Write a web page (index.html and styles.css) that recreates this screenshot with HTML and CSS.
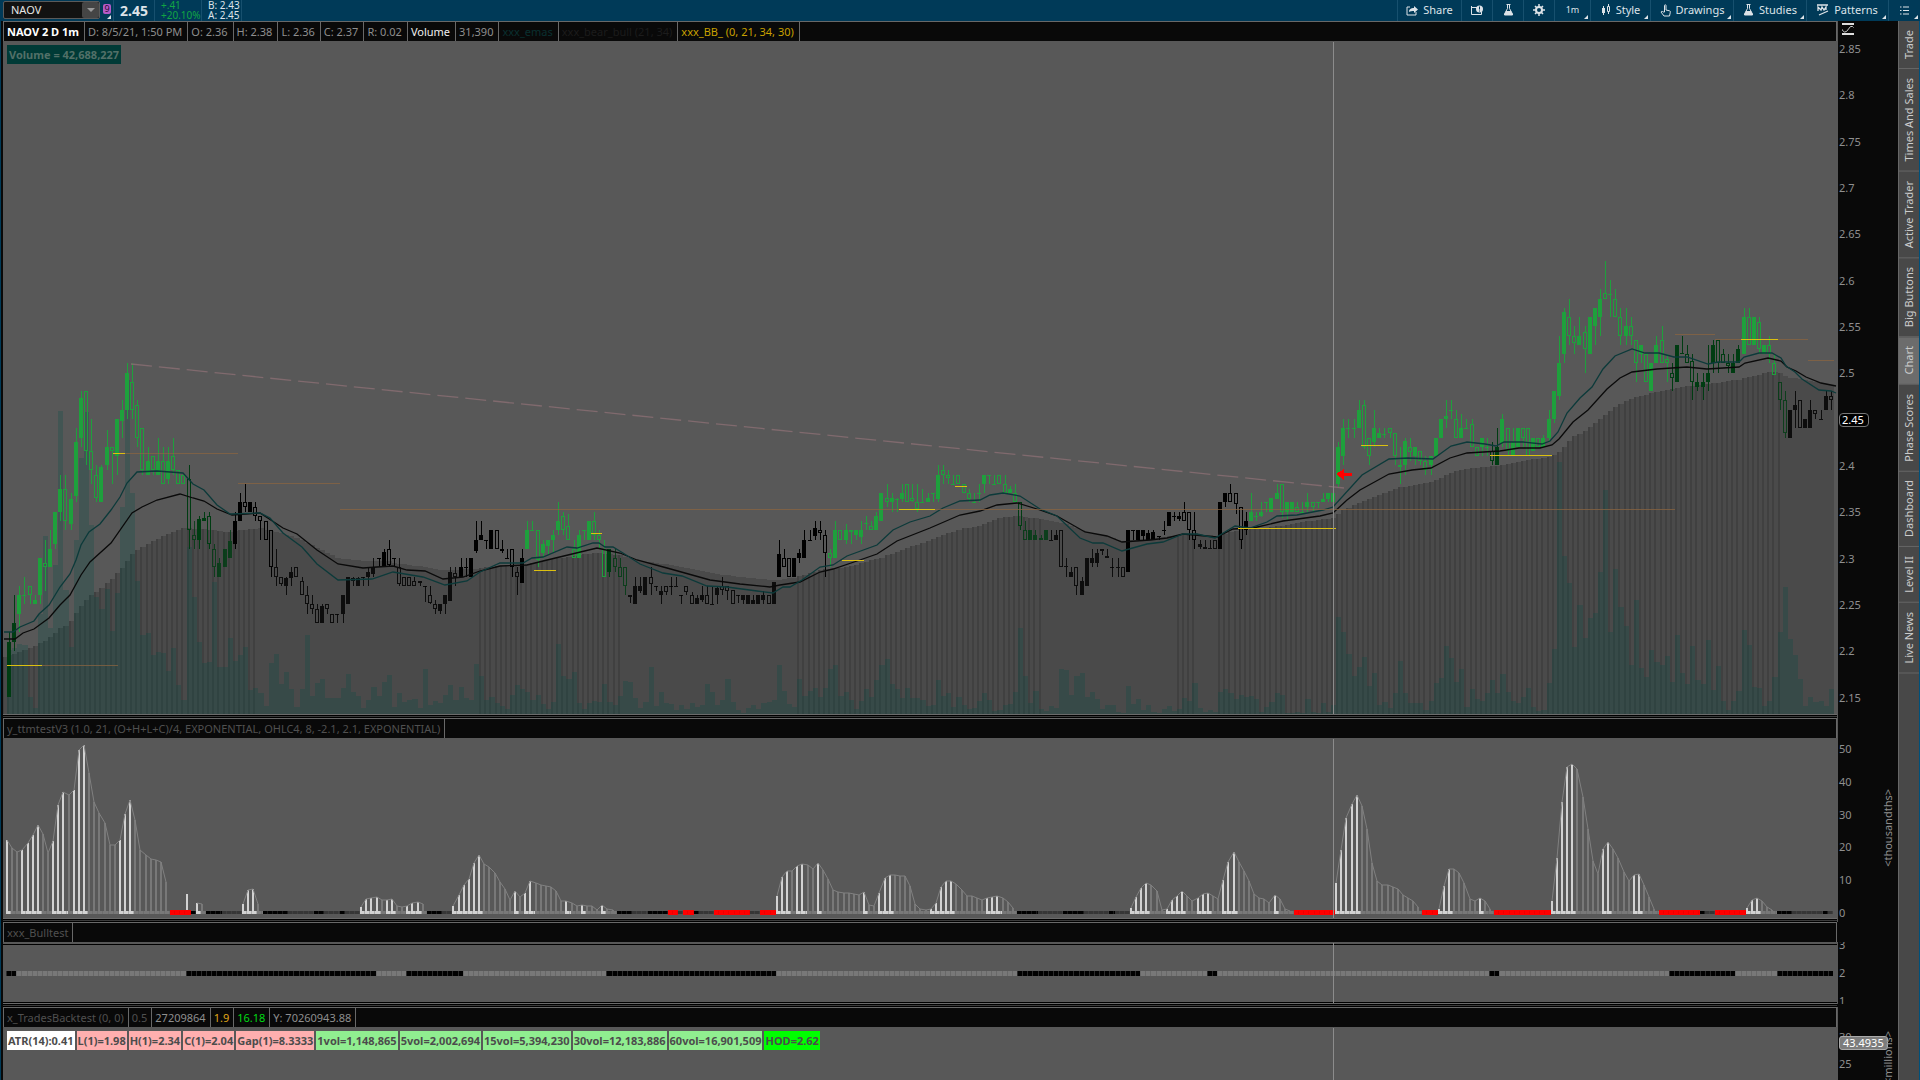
FILE: index.html
```html
<!DOCTYPE html>
<html lang="en">
<head>
<meta charset="utf-8">
<title>NAOV Chart</title>
<link rel="stylesheet" href="styles.css">
</head>
<body>
<header class="topbar">
  <div class="symbol">
    <input class="symbol-input" type="text" value="NAOV" aria-label="Symbol">
    <button class="symbol-drop" aria-label="Symbol list"><svg width="8" height="5" viewBox="0 0 8 5"><path d="M0 0h8L4 4z" fill="#999"/></svg></button>
  </div>
  <button class="link-color corner" aria-label="Link 9"><span class="link-tag">9</span></button>
  <div class="last">2.45</div>
  <div class="pair up"><span>+.41</span><span>+20.10%</span></div>
  <div class="pair quote"><span>B: 2.43</span><span>A: 2.45</span></div>
  <nav class="tools">
    <button class="tool w64"><svg width="12" height="11" viewBox="0 0 12 11"><path d="M4 2H1v8h9V7" fill="none" stroke="#dde3e8"/><path d="M3 7c0-3 2-4 5-4V1l4 3.500L8 8V6C6 6 4 6 3 7z" fill="#dde3e8"/></svg>Share</button>
    <button class="tool w31" aria-label="Info"><svg width="12" height="10" viewBox="0 0 12 10"><path d="M.5 2.500h6M.5 1v8.500h10V7" fill="none" stroke="#dde3e8"/><circle cx="8.500" cy="4" r="3.500" fill="#dde3e8"/><path d="M8.500 1.500v3M8.500 5.500v1" stroke="#003a58"/></svg></button>
    <button class="tool w31" aria-label="Edit studies"><svg width="11" height="12" viewBox="0 0 11 12"><path d="M3.500.5h4M4.500.5v4L1.500 10v1h8v-1l-3-5.500v-4" fill="none" stroke="#dde3e8"/><path d="M3 7h5l2 4H1z" fill="#dde3e8"/></svg></button>
    <button class="tool w31" aria-label="Settings"><svg width="12" height="12" viewBox="0 0 12 12"><circle cx="6" cy="6" r="3" fill="none" stroke="#dde3e8" stroke-width="2"/><path d="M6 0v3M6 9v3M0 6h3M9 6h3M2 2l2 2M8 8l2 2M10 2L8 4M4 8l-2 2" stroke="#dde3e8" stroke-width="1.500"/></svg></button>
    <button class="tool w36 corner small">1m</button>
    <button class="tool w60 corner"><svg width="10" height="12" viewBox="0 0 10 12"><path d="M2.500 2v9M7.500 0v10" stroke="#dde3e8"/><path d="M1 4h3v5H1z" fill="#dde3e8"/><path d="M6.500 2.500h2v5h-2z" fill="#003a58" stroke="#dde3e8"/></svg>Style</button>
    <button class="tool w83 corner"><svg width="11" height="13" viewBox="0 0 11 13"><path d="M4.500 8V1.500c0-1 1.500-1 1.500 0V6l3.500.8c.8.2 1 .7.8 1.500L9.500 12H4L1 8c.5-1 1.500-.8 2.200 0z" fill="none" stroke="#dde3e8"/></svg>Drawings</button>
    <button class="tool w73 corner"><svg width="11" height="12" viewBox="0 0 11 12"><path d="M3.500.5h4M4.500.5v4L1.500 10v1h8v-1l-3-5.500v-4" fill="none" stroke="#dde3e8"/><path d="M3 7h5l2 4H1z" fill="#dde3e8"/></svg>Studies</button>
    <button class="tool w82 corner"><svg width="12" height="12" viewBox="0 0 12 12"><path d="M0 1h11M2 11l9-4M1 7V3l3 3 1-3 2 3 2-3v3" fill="none" stroke="#dde3e8" stroke-width="1.300"/></svg>Patterns</button>
    <button class="tool w32 corner" aria-label="Menu"><svg width="9" height="9" viewBox="0 0 9 9"><path d="M0 1h1.500M0 4.500h1.500M0 8h1.500M3 1h6M3 4.500h6M3 8h6" stroke="#dde3e8" stroke-width="1.200"/></svg></button>
  </nav>
</header>
<div class="workspace">
  <main class="charts">
    <section class="panel price">
      <div class="head">
        <span class="strong">NAOV 2 D 1m</span><span>D: 8/5/21, 1:50 PM</span><span>O: 2.36</span><span>H: 2.38</span><span>L: 2.36</span><span>C: 2.37</span><span>R: 0.02</span><span class="white">Volume</span><span>31,390</span><span class="teal">xxx_emas</span><span class="faint">xxx_bear_bull (21, 34)</span><span class="gold">xxx_BB_ (0, 21, 34, 30)</span>
      </div>
      <div class="plot">
        <svg id="price" viewBox="3 41 1834 673" preserveAspectRatio="none"></svg>
        <div class="chips"><span class="chip volume">Volume = 42,688,227</span></div>
      </div>
      <div class="axis">
        <svg class="fit" width="13" height="14" viewBox="0 0 13 14"><path d="M0 2h12M0 12h12" stroke="#ddd" stroke-width="2"/><path d="M.5 7.500v1l2 1.500 2-.5 4-5h2l1 1" fill="none" stroke="#ccc"/></svg>
        <span>2.85</span><span>2.8</span><span>2.75</span><span>2.7</span><span>2.65</span><span>2.6</span><span>2.55</span><span>2.5</span><span class="current">2.45</span><span>2.4</span><span>2.35</span><span>2.3</span><span>2.25</span><span>2.2</span><span>2.15</span>
      </div>
    </section>
    <section class="panel ttm">
      <div class="head dim"><span>y_ttmtestV3 (1.0, 21, (O+H+L+C)/4, EXPONENTIAL, OHLC4, 8, -2.1, 2.1, EXPONENTIAL)</span></div>
      <div class="plot"><svg id="ttm" viewBox="3 738 1834 180" preserveAspectRatio="none"></svg></div>
      <div class="axis"><span>50</span><span>40</span><span>30</span><span>20</span><span>10</span><span>0</span><em class="unit">&lt;thousandths&gt;</em></div>
    </section>
    <section class="panel bull">
      <div class="head dim"><span>xxx_Bulltest</span></div>
      <div class="plot"><svg id="bull" viewBox="3 942 1834 61" preserveAspectRatio="none"></svg></div>
      <div class="axis"><span>3</span><span>2</span><span>1</span></div>
    </section>
    <section class="panel trades">
      <div class="head"><span class="dim">x_TradesBacktest (0, 0)</span><span class="dim">0.5</span><span>27209864</span><span class="amber">1.9</span><span class="green">16.18</span><span>Y: 70260943.88</span></div>
      <div class="plot">
        <svg id="trades" viewBox="3 1027 1834 53" preserveAspectRatio="none"></svg>
        <div class="chips"><span class="chip">ATR(14):0.41</span><span class="chip pink">L(1)=1.98</span><span class="chip pink">H(1)=2.34</span><span class="chip pink">C(1)=2.04</span><span class="chip pink">Gap(1)=8.3333</span><span class="chip mint">1vol=1,148,865</span><span class="chip mint">5vol=2,002,694</span><span class="chip mint">15vol=5,394,230</span><span class="chip mint">30vol=12,183,886</span><span class="chip mint">60vol=16,901,509</span><span class="chip lime">HOD=2.62</span></div>
      </div>
      <div class="axis"><span>30</span><span>25</span><strong class="marker">43.4935</strong><em class="unit">&lt;millions&gt;</em></div>
    </section>
  </main>
  <nav class="tabs">
    <button>Trade</button><button>Times And Sales</button><button>Active Trader</button><button>Big Buttons</button><button class="on">Chart</button><button>Phase Scores</button><button>Dashboard</button><button>Level II</button><button>Live News</button>
  </nav>
</div>
<script src="chart.js"></script>
</body>
</html>
```
FILE: styles.css
```css
* { box-sizing: border-box; }
body {
  margin: 0;
  height: 100vh;
  display: flex;
  flex-direction: column;
  overflow: hidden;
  background: #090909;
  color: #8f8f8f;
  font: 11px/16px "Noto Sans", "Open Sans", sans-serif;
}
button { border: 0; padding: 0; margin: 0; background: none; color: inherit; font: inherit; }

.topbar { display: flex; flex: 0 0 21px; background: #003a58; color: #dde3e8; padding-left: 3px; }
.symbol { display: flex; width: 97px; height: 18px; margin: 1px 3px 0 0; border: 1px solid #5a5a5a; border-radius: 2px; background: #121212; }
.symbol-input { flex: 1; min-width: 0; border: 0; padding: 0 0 0 7px; background: none; color: #e6e6e6; font: inherit; }
.symbol-drop { width: 17px; background: #454545; display: grid; place-items: center; border-radius: 2px; }
.link-color { width: 10px; display: flex; align-items: flex-start; padding-top: 4px; }
.link-tag { width: 8px; height: 10px; background: #b45ac8; color: #2a0a30; font-size: 9px; line-height: 10px; border-radius: 2px; text-align: center; }
.last { width: 41px; border-left: 1px solid #17506e; text-align: center; font-size: 14px; font-weight: 700; line-height: 21px; }
.pair { display: flex; flex-direction: column; width: 47px; border-left: 1px solid #17506e; padding: 0 0 0 6px; font-size: 10px; line-height: 10px; }
.up { color: #12a544; }
.quote { width: 41px; border-right: 1px solid #17506e; }
.tools { display: flex; margin-left: auto; }
.tool { display: flex; align-items: center; justify-content: center; gap: 5px; border-left: 1px solid #17506e; padding-bottom: 1px; white-space: nowrap; }
.small { font-size: 9px; }
.corner { position: relative; }
.corner::after { content: ""; position: absolute; right: 2px; bottom: 2px; border: 2px solid transparent; border-right-color: #dde3e8; border-bottom-color: #dde3e8; }
.w31 { width: 31px; } .w32 { width: 32px; } .w36 { width: 36px; } .w60 { width: 60px; }
.w64 { width: 64px; } .w73 { width: 73px; } .w82 { width: 82px; } .w83 { width: 83px; }

.workspace { flex: 1; min-height: 0; display: flex; border-left: 1px solid #003a58; border-right: 1px solid #00507a; }
.charts { flex: 1; min-width: 0; display: flex; flex-direction: column; padding-left: 2px; }
.panel { display: grid; grid-template: 20px minmax(0, 1fr) 4px / minmax(0, 1fr) 61px; min-height: 0; overflow: hidden; }
.price { flex: 697 1 0; }
.ttm { flex: 204 1 0; }
.bull { flex: 85 1 0; }
.trades { flex: 73 1 0; grid-template-rows: 20px minmax(0, 1fr); }
.panel::after { content: ""; grid-row: 3; grid-column: 1; border-top: 1px solid #6a6a6a; background: linear-gradient(#000 1px, #3a3a3a 1px, #3a3a3a 2px, #000 2px); }
.trades::after { display: none; }
.head { grid-row: 1; grid-column: 1; display: flex; border: 1px solid #686868; border-bottom: 0; white-space: nowrap; line-height: 19px; }
.head span { padding: 0 5px 0 3px; border-right: 1px solid #686868; }
.head .strong { color: #fff; font-weight: 700; }
.head .white { color: #f0f0f0; }
.head .teal { color: #0a3030; }
.head .faint { color: #1c1c1c; }
.head .gold { color: #c8a000; }
.head .amber { color: #e0a818; }
.head .green { color: #00dc14; }
.dim, .head .dim { color: #505050; }
.ttm .head span, .bull .head span, .trades .head span { padding: 0 4px 0 3px; }
.plot { grid-row: 2; grid-column: 1; display: grid; min-height: 0; background: #585858; overflow: hidden; }
.plot svg { grid-area: 1 / 1; width: 100%; height: 0; min-height: 100%; display: block; }
.chips { grid-area: 1 / 1; align-self: start; display: flex; gap: 2px; padding: 4px; }
.chip { height: 19px; padding: 0 1px; background: #fff; color: #4c4c4c; font-weight: 700; line-height: 19px; white-space: nowrap; }
.volume { padding: 0 2px; background: #003a36; color: #527068; }
.pink { background: #ffafaf; }
.mint { background: #90ee90; }
.lime { background: #0f0; }

.axis { position: relative; grid-row: 1 / -1; grid-column: 2; display: flex; flex-direction: column; justify-content: space-between; align-items: flex-start; padding-left: 1px; border-left: 1px solid #585858; overflow: hidden; }
.price .axis { padding-top: 20px; padding-bottom: 12px; }
.ttm .axis { padding-top: 23px; padding-bottom: 1px; }
.bull .axis { margin: 20px 0 3px; justify-content: center; }
.bull .axis span { flex: none; line-height: 28px; }
.trades .axis { grid-row: 1 / 3; padding-top: 22px; justify-content: flex-start; gap: 11px; }
.fit { position: absolute; left: 4px; top: 1px; }
.axis .current { height: 14px; margin: 1px 0; padding: 0 4px 0 2px; border: 1px solid #777; border-radius: 4px; background: #000; color: #fff; line-height: 12px; }
.unit { position: absolute; right: 2px; top: 71px; font-style: normal; writing-mode: vertical-rl; transform: rotate(180deg); }
.trades .unit { top: 24px; }
.marker { position: absolute; left: 1px; top: 29px; height: 14px; padding: 0 3px; border: 1px solid #aaa; border-radius: 3px; background: #7c7c7c; color: #fff; font-weight: 400; line-height: 12px; }

.tabs { width: 21px; display: flex; flex-direction: column; background: #484848; border-left: 1px solid #666; }
.tabs button { writing-mode: vertical-rl; transform: rotate(180deg); width: 20px; padding: 9px 0; border-top: 1px solid #666; color: #ccc; line-height: 20px; white-space: nowrap; }
.tabs .on { background: #6c6c6c; }
```
FILE: chart.js
```js
// One entry per minute bar: colour letter (g bright, d dark, k black; capital = filled),
// then high, body top, body bottom and low, in cents above 2.00.
const candles = `D22 21 15 15|D26 23 21 20|G27 26 24 22|g28 26 26 25|g27 27 26 25|G26 25.5 25 25|G30 30 26 25|g32 29.5 29 26.5|G33 31 29 29|G35 35 31.5 31
G39 37.5 35 34|g39 37.5 34 33|G37 36.4 33.7 33|G44 42.5 36.7 36|G48 47.3 43 42|g48 48 41.5 40|g45 41.5 39.5 38|g40 39 36.5 36|G40 39.8 36 36|G43.8 42 40 39.5
g42 42 41.5 38|G45 45 41 39|G47 46 44.8 43|G51 50 46 45|g51 49 46 45|g47 46.5 43 42|g44 44 39.5 39|G42 40.5 39 39|g41 41 39.5 39|G43 40.5 39 39
g42 40.5 38 38|G42 40.5 38.5 38|g43 41 39.5 39|g39.5 39.5 38 38|g39 39 38 38|d40 38.5 33 31|d34 32.5 32 31|D34.5 34.2 32 31|D35 34.3 34 34|d35 34.5 31.5 31
d31.5 31 29 28|D30 29.5 28 28|D31 31 29 29|D33 31.8 30 30|K35 34 31.5 31|K37 36 34 34|k38 36 35.5 35|K36 36 35 35|k36 35.5 34.5 34|k34.5 34.5 34 32
k34 34 32 32|k33 33 29 28|k31 29 28 27|k28 28 27.2 27|K28 27.8 27 26|K29 28.5 27.8 27|k29 29 28 28|k28 27.5 26 26|k27 26 25 24|k26 25 24.5 24
k25 24.5 23 23|K25 24.8 23 23|k25 25 24.5 24|k24 24 23 23|k24 24 24 23|K26 26 24 23|K28 28 25 25|K28 27.9 27.5 27|K28 27.8 27 27|k28 28 28 27
K29 28.5 28 27|K30 29 28.3 28|k30 30 30 29|K31 30.7 29 29|k32 31 29.2 29|K30 30 29.9 29|k30 29 27.2 27|k28 28 27 27|k28 28 27 27|k28 27.5 27 27
K27.5 27.5 27.3 27|k27 27 27 25.3|k27 26 25.2 25|k25.5 25 24.5 24|K25 25 24.3 24|K26 26 25 24|K29 28.5 25.4 25.4|k29 28.4 28 27|K30 29 28 28|k30 29 29 28
K30 30 28 28|K34 32 30.8 30.6|K34 32.5 32 32|k32 32 31.8 31|K33 33 31 31|k33 33 31 31|k32 31 30.8 30.5|K31 30 29.9 30|k31 31 29 28|k29 28.5 28 26
K31 30 27.3 27.3|G34 33 31 31|g34 33 33 33|g33 33 29.8 29|G32 31.5 30.5 30|G32 32 31.3 30.3|G33 32.5 32 30.5|G36 34 33 32.5|g35 34.5 33 32.5|g34.8 33.5 32 32
g32 31 30 30|G33 32.5 30 30|g33 33 33 32|G34 34 32 32|g35 34 32.5 32|g33 32.5 32 31|g32 31 28 28|D31 31 28.5 28|d31 30 29 28.5|d30 29 28 28
d29 29 27 26|K26 26 25.8 25.2|K28 27 25 25|K28 27 26.5 26.2|K28 28 26 26|k29 28 27.2 26|k27 27 27 26.5|K27 26.5 26 25|k27 27 26.3 26|k28 27 27 26
k28 27 27 27|k26 26 26 25|k27 27 26.3 26|k26.3 26 25 25|K26 25.7 25 25|K27 26 25.5 25.3|k27 26 25 25|k27 25 25 25|K27 26.8 26 25|k28 27 26.6 26
k27 27 26.5 25.5|k26.6 26.6 25 25|k26 26 26 25.2|K26 26 25.5 25|K26 26 25 25|K26 25.5 25 25|K26 26 25 25|K26.5 26 25.5 25|k26 26 25 25|K27.4 27.4 25 25
K32 30.4 28 28|k31 30 29 29|k30 30 28 28|K30 30 28 28|K31 30.5 30 29.5|K33 32 30 30|k33 32 32 32|K34 33.2 32.4 32|k34 33 32.7 32|k33 32.5 30.5 28
g31 30.5 30 29|G34 33 30 30|g33 33 32 32|G33.7 33 32 31.5|g33 33 32.8 31.5|G33 33 32.5 32|G34 33 32.3 31.5|G34.5 33.8 33.7 33|g34 33.5 33 33|G35 34.5 33 33
G37 37 34 34|g38 36.5 36 35.5|G37 36.5 36 35|G36.5 36.4 36.3 35|G38 37 36.4 36|g38 38 36 36|g38 36.5 36.2 36|g38 36 35.3 35|g37.5 36 36 36|G37 36.5 36 36
g37 37 37 36|G40 39 36.4 36|g40 39.5 39 38|g39.5 39 38.6 38|g39 38 38 38|g39 39 38 38|g38 38 37 37|g37.5 37 36.4 36|g37 36 36 36|G38 37 36.9 36
G39 39 38 37|G39 39 38.8 38|g39 38 38 38|g39 39 38 38|g39 38 37 37|G37.8 37.5 37 37|g38 37 36 36|d36 36 33.5 33|d34 33 32 32|D33 33 32 32
D33 32.5 32 32|D32.5 32.2 32 32|D33 33 32 32|k33 32 32 32|K33 32.5 32 32|k33 33 29 29|K30 29.1 29 28|K29 28.5 28 28|k29 29 27 26|K28 27.5 26 26
K30 30 27 27|K31 30 29.5 29|K31 30.5 29.5 29|k31 31 30.8 30.3|k31 30.2 30 30|k30 29 29 28|K30 29 28.9 28|k29 29 28 28|K33 33 28.5 28.5|k33 33 33 32
K33 33 32 32|K33 33 32.4 32|K33 32.7 32 32|K33 32.8 32 32|k32.4 32.4 32.4 32|k34 33 33 32.5|K35 35 33.5 33.5|k35 34.5 34.5 34|K35 34.5 34.2 34|k36 35 34 34
k35 35 33 32|k35 33 32 31|K32 31.5 31.2 31|K32 31.2 31 31|K32 31.1 31 31|k32 32 31 31|K36 36 31 31|K37 37 36 35.5|k38 37 36 36|k37 37 35.8 34.8
k35.5 35.5 32 31|K35 34 33 32.5|G37 35 34 34|g35 34.5 34.5 34|G36 35 34.5 34.4|g36 36 36 35|G36.5 36.5 35 35|G38 37 36.4 36.4|g38 38 35 34.3|G36 36 35 34
G36 36 35 35|g36 35.5 35 35|g36 35 35 35|G37 36 35.5 35|g36 36 35.5 35|g36 36 36 35.4|G37 36.4 36 36|G37 37 36.4 36|G38 37 36 36|G42.5 42 38 37.6
G45 44 41 40|g45 44 44 43|G45 44 43.9 43|G47 46 44 44|g47 46.5 42 41.8|g43 43 41 40|G46 44 42.5 42|G44 43.5 43 43|g44 43.4 43.4 43|g44 44 43.5 43
g43.5 43.5 41 40|g42 40 39.8 38|G43 42.6 40 39|g43 42 41.4 40.5|G42 42 41 40|g41.6 41.5 40.5 40|g41 40.5 39.5 39|G41 41 40 39|G43 43 41 41|G45 45 43 43
G47 45.3 45 44|g47 46 46 45|g46 45 43 43|G45.5 44 43 43|g45 44 44 44|g45 44.5 42 42|g42 42 41 41|G43 43 42 41|g43 42 42 41|d42.5 41.6 40.5 40
D44 42 40 40|G45.5 45 42.4 42|g44 44 41.5 41|G44 42.5 41 41|G44 44 42 42|g44 44 43 42|g44 44 41 41|G43 42.9 41.5 41.5|g43 43 42 42|G43.3 43 42 42
G46 45 43 42.5|G48 48 45 44.6|G54 51 47.5 47|G57 56.5 52 51|g58 56 54 53|g55 54 53.2 52|G56 54 53 53|g55 54.4 52.5 50|G56 56 52 52|G57 57 55 53
G59 58 56 54|g62 58.6 58 58|g60 58.5 58.5 56|g59 58 56 56|g57 56 54 53|G57 55 54 53|g56 55 54 53|g53.5 53.5 51 49|G53 53 52 51|g52 52 49 49
G51 51 48 48|G54 53 51 51|g55 53.5 51 51|g52 51.5 51 49|d51 50 49.4 48|D53 53 49 49|D54 52.1 52 52|d53 52 51 51|d52 51.3 49 47|D50 49 48.5 48
D50 49 48.5 47|D53 50 49 48|D53.5 53 51 50|d53.5 53.5 51 50|d52.5 52 51 51|d52 51 50.7 50|D52 51 50 50|D53 52.6 51 51|G57 56 52 52|g57 56 53 53
G56 56 53 53|g56 55.5 52.5 52|G53 53 52 52|g54 53 52 51|g52 51 49.7 49.7|d49 49 47 46|d48 47 43.5 43|K46 46 43 43|K48 46.5 46 44|k47 47 44 44
K45 45 44 44|K47 46 44 44|k46 46 45.5 45|k46 45 45 45|K48 47.5 46 46|k48 47.5 47 46`.split(/[|\n]/);

// Volume bar heights
const volume = `64 66 70 69 17 6 100 178 86 149 303 124 67 174 256 302 189 117 105 125 83 121 207 334 221 133 79 81 59 62 61 43 66 29 14 167 117 72 51 52 132 47 47 76 53 59 67 24 26 21
8 51 60 30 42 25 7 25 79 18 31 35 16 16 16 26 40 22 18 6 14 27 18 32 39 7 21 12 14 15 6 45 9 13 11 19 29 14 27 16 14 50 38 14 17 11 8 5 19 29
25 22 14 19 10 5 12 70 38 35 42 11 5 11 13 12 30 12 9 18 33 32 16 6 12 47 8 22 11 10 4 9 5 11 7 9 30 22 9 14 35 12 4 1 6 9 5 11 12 14
49 23 10 7 35 18 23 26 17 26 45 49 18 22 14 5 13 25 17 34 49 55 30 25 16 26 16 16 14 8 9 34 18 21 7 17 9 5 6 13 21 14 3 4 9 10 22 86 38 11
23 5 3 8 6 45 44 19 38 41 17 22 15 5 9 9 2 1 28 10 15 4 9 2 1 5 8 3 5 16 13 31 6 2 4 2 22 25 21 15 19 17 18 15 2 7 12 21 19 1
1 2 1 15 2 1 11 2 9 97 82 60 38 47 57 28 41 9 12 6 21 53 21 11 11 11 4 13 31 36 68 56 32 45 7 25 15 13 21 34 21 40 22 13 11 17 26 7 3 4
31 65 252 158 131 67 109 76 96 101 142 224 82 145 107 88 49 114 46 37 64 52 49 58 32 79 41 30 68 34 30 74 24 48 13 4 13 23 84 69 27 26 8 13 37 82 127 75 59 35 8 17 12 13 8 25`.split(/\s+/).map(Number);

const fastAverage = "4,632 13,632 20,627 34,621 39,614 49,605 60,587 70,574 76,560 81,545 89,532 100,524 111,510 120,497 127,483 137,472 157,471 183,473 193,484 204,490 217,505 230,514 260,513 270,518 283,533 302,547 317,564 338,580 372,579 393,572 423,577 445,585 467,581 480,572 500,563 523,563 532,558 543,557 567,547 577,548 593,543 599,543 605,547 613,547 623,553 640,564 663,573 682,576 707,586 727,587 757,591 773,593 783,587 790,587 802,580 820,567 833,565 847,556 877,545 893,530 910,522 930,516 943,508 960,501 980,500 990,495 1003,493 1020,496 1040,509 1057,516 1080,538 1093,543 1103,543 1122,551 1147,544 1163,542 1183,534 1197,534 1215,538 1235,526 1250,528 1267,522 1277,516 1297,515 1323,510 1333,507 1362,475 1389,459 1408,458 1433,459 1451,446 1467,442 1485,444 1496,446 1504,442 1523,442 1542,444 1550,441 1558,432 1567,413 1580,398 1592,387 1603,369 1615,356 1632,349 1645,353 1659,353 1674,357 1687,357 1708,364 1718,362 1739,362 1744,357 1759,353 1772,353 1781,358 1786,366 1795,372 1802,379 1819,390 1831,391 1836,393";
const slowAverage = "4,639 15,639 23,633 34,629 49,618 60,605 70,595 81,575 90,562 111,543 132,513 142,507 157,500 180,494 193,498 204,501 217,509 232,515 260,513 283,528 297,534 317,550 338,564 363,568 377,567 393,566 407,570 425,571 443,579 463,577 480,571 500,566 527,565 543,561 597,548 620,553 637,560 667,568 710,580 740,584 770,587 780,585 800,582 820,572 833,569 857,561 877,554 897,541 930,528 960,515 980,511 997,505 1017,503 1037,509 1057,516 1085,532 1107,536 1122,542 1150,540 1167,538 1183,534 1217,537 1233,529 1253,528 1283,521 1320,516 1333,513 1347,500 1360,490 1389,474 1412,470 1431,468 1450,458 1467,453 1500,451 1519,448 1540,448 1552,445 1559,439 1573,422 1588,410 1607,389 1620,378 1632,372 1657,369 1687,367 1707,369 1739,367 1745,363 1768,358 1781,361 1787,367 1796,371 1806,377 1821,383 1836,386";
const cloud = "4,657 17,653 33,647 48,639 60,628 70,623 80,607 90,596 110,581 123,567 133,552 157,539 183,528 203,529 227,532 260,528 283,534 300,539 317,548 338,558 367,561 387,561 400,564 427,567 440,570 473,569 480,568 500,566 527,564 560,558 593,553 620,555 640,561 673,565 710,573 757,579 780,580 797,577 820,570 847,567 880,558 913,546 960,529 980,526 1000,518 1017,516 1043,519 1063,523 1087,532 1107,536 1120,541 1153,538 1173,536 1193,533 1217,536 1233,531 1273,527 1310,521 1333,518 1343,510 1362,502 1397,488 1435,481 1450,473 1465,469 1496,466 1527,460 1550,457 1559,452 1573,437 1588,429 1603,417 1615,407 1632,398 1653,393 1687,386 1718,383 1741,379 1770,372 1781,373 1787,377 1814,382 1836,386";

// Histogram: w rising, f falling, with bar height; R, K, D mark bars without height
const histogram = `w72 f64 f60 w62 w69 w77 w87 f78 f59 w71 w107 w120 f117 w122 w162 w167 f139 f110 f99 f89 f67 f67 w72 w98 w112 f92 f62 f57 f53 f52 f50 f30 R R R R18 K w9 f8 K K K D D D D w8 w22 w23 f8
K K K K K D D D D D K K D D D K D D D w5 w13 w14 w15 f12 w12 w13 f6 f5 w6 w9 w10 f8 K K K D D w6 w17 w27 w33 w49 w57 f48 f45 f39 f30 f23 f12 w21
f15 w19 w31 f29 f27 f26 f25 f21 f11 w11 f9 f6 w7 f6 f6 f2 w7 f3 f2 K K K D D D K K K K R R D R R K D D D R R R R R R R D D R R R
w16 w35 w41 f41 w46 w48 f47 f43 w49 f42 f33 f22 f20 f19 f19 f18 f17 w20 f7 f6 w19 w34 w37 f37 f36 f36 f26 f8 f3 f2 w3 w9 w25 w31 w31 f28 f22 f16 f16 f14 f12 w14 w15 w16 f14 f10 f4 K K K
K D D D D D K K K K D D D D D K D D D w4 w15 w24 w29 f27 f21 f2 w3 w12 w16 w21 f16 f11 w14 w18 w19 f16 f13 w32 w50 w60 f50 f41 f31 f18 f14 f13 f9 w17 f13 f3
f1 R R R R R R R R w29 w62 w94 w108 w117 f106 f83 f49 f31 f27 f27 f25 f23 f17 f14 f11 f5 R R R w3 w26 w43 f43 f39 f29 f13 f11 w14 f11 f3 R R R R R R R R R R
R w11 w54 w110 w145 w148 f143 f115 f83 f51 f38 w63 w70 f63 f54 f40 f31 w37 w38 f27 f15 f3 R R R R R R R R K D D R R R R R R w4 w12 w14 f11 f5 f2 K K K D D D D D D K D`.split(/\s+/);

const step = 5.132;
const r = Math.round;
const centre = i => r(9 + step * i);
const priceY = c => r(363.4 + (51 - c) * 9.27);
const rect = (x, y, w, h, fill, more = "") => `<rect x="${x}" y="${y}" width="${w}" height="${h}" fill="${fill}" ${more}/>`;
const crosshair = (top, bottom) => rect(1333, top, 1, bottom - top, "#8c8c8c");
const draw = (id, parts) => { document.getElementById(id).innerHTML = parts.join(""); };

const cloudPoints = cloud.split(" ").map(p => p.split(",").map(Number));
function cloudY(x) {
  let k = 1;
  while (k < cloudPoints.length - 1 && cloudPoints[k][0] < x) k++;
  const [a, b] = cloudPoints[k - 1], [c, d] = cloudPoints[k];
  return r(b + (d - b) * Math.min(1, Math.max(0, (x - a) / (c - a))));
}

const price = [];
const striped = x => x < 260 || (x > 480 && x < 624) || (x > 794 && x < 1045) || (x > 1174 && x < 1196) || (x > 1216 && x < 1785);
for (let i = -1; i < 356; i++) {
  const x = centre(i), left = Math.max(3, x - 2), y = cloudY(x);
  price.push(rect(left, y, centre(i + 1) - x + (i < 0 ? 1 : 0), 714 - y, "#4a4a4a"));
  if (striped(x)) price.push(rect(x - 2, y, 2, 714 - y, "#404040"));
}
volume.forEach((h, i) => price.push(rect(centre(i) - 2, 714 - h, centre(i + 1) - centre(i), h, "#004a44", 'opacity=".25"')));

candles.forEach((text, i) => {
  const letter = text[0], [high, top, bottom, low] = text.slice(1).split(" ").map(v => priceY(+v));
  const x = centre(i), colour = { g: "#1ea03c", d: "#003c12", k: "#000000" }[letter.toLowerCase()];
  const shade = top > cloudY(x) ? 'opacity=".82"' : "";
  const height = Math.max(1, bottom - top);
  if (high < top) price.push(rect(x, high, 1, top - high, colour, shade));
  if (low > bottom) price.push(rect(x, bottom, 1, low - bottom, colour, shade));
  if (letter < "a" || height < 3) price.push(rect(x - 2, top, 4, height, colour, shade));
  else price.push(`<rect x="${x - 1.5}" y="${top + 0.5}" width="3" height="${height - 1}" fill="none" stroke="${colour}" ${shade}/>`);
});
price.push(`<g fill="none" stroke-width="1.300" style="shape-rendering:auto"><polyline points="${slowAverage}" stroke="#0a0a0a"/><polyline points="${fastAverage}" stroke="#0c3a3a"/>
<path d="M131 364L1344 488" stroke="#806a6e" stroke-dasharray="21 7"/></g>`);
[[125, 238, 453], [238, 340, 483], [340, 1675, 509], [42, 118, 665], [1675, 1715, 334], [1715, 1808, 339], [1808, 1834, 360]]
  .forEach(([a, b, y]) => price.push(rect(a, y, b - a, 1, "#8a6440", 'opacity=".75"')));
[[7, 42, 665], [113, 125, 453], [534, 556, 570], [591, 602, 533], [842, 864, 560], [899, 935, 509], [955, 967, 486], [1238, 1336, 528], [1361, 1388, 445], [1490, 1552, 455], [1741, 1778, 339]]
  .forEach(([a, b, y]) => price.push(rect(a, y, b - a, 1, "#dcc010")));
price.push(crosshair(42, 714), '<path d="M1336 474l8-5v4h8v3h-8v4z" fill="#f00"/>');
draw("price", price);

const ttm = [];
const tone = { w: "#d2d2d2", f: "#787878", R: "#ff0000", K: "#000000", D: "#363636" };
const slot = i => r(6 + step * i);
let line = [];
const flush = () => { if (line.length > 1) ttm.push(`<polyline points="${line.join(" ")}" fill="none" stroke="#808080" style="shape-rendering:auto"/>`); line = []; };
histogram.forEach((code, i) => {
  const kind = code[0], h = +code.slice(1), x = slot(i), tall = kind === "R" ? 5 : 3;
  if (kind === "w" || kind === "f") line.push(`${x + 1},${912 - h}`); else flush();
  if (h) ttm.push(rect(x, 912 - h, 2, h, kind === "R" ? tone.w : tone[kind]));
  ttm.push(rect(x, 911 - (tall - 3) / 2, slot(i + 1) - x, tall, tone[kind]));
  ttm.push(rect(x + 4, 911, 1, 3, kind === "R" ? "#c00000" : "#585858", 'opacity=".3"'));
});
flush();
ttm.push(crosshair(739, 918));
draw("ttm", ttm);

const bull = [rect(3, 944, 1834, 1, "#000"), rect(3, 1002, 1834, 1, "#000")];
const darkRuns = [[0, 1], [35, 71], [78, 88], [117, 149], [197, 220], [234, 235], [289, 290], [324, 336], [345, 355]];
for (let i = 0; i < 356; i++) {
  const dark = darkRuns.some(([a, b]) => i >= a && i <= b), x = slot(i);
  bull.push(rect(x, 971, slot(i + 1) - x, 5, dark ? "#000" : "#787878"), rect(x, 971, 1, 5, dark ? "#2a2a2a" : "#686868"));
}
bull.push(crosshair(943, 1003));
draw("bull", bull);
draw("trades", [crosshair(1028, 1080)]);
document.querySelectorAll(".plot svg").forEach(s => s.setAttribute("shape-rendering", "crispEdges"));
```
